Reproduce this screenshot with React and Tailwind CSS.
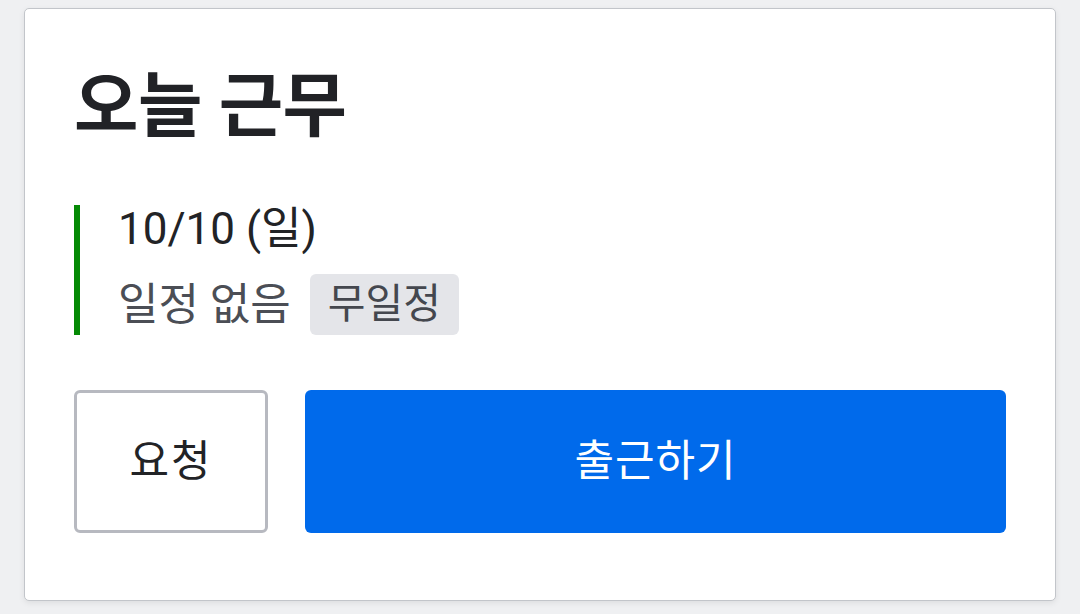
export default function App() {
  return (
    <div
      className="min-h-[614px] bg-[#eff0f2] pt-2 px-6"
      style={{ fontFamily: 'Roboto, "Noto Sans CJK KR", sans-serif' }}
    >
      <div className="h-[593px] bg-white border border-[#c2c5ca] rounded-[5px] shadow-[0_2px_6px_rgba(0,0,0,0.08)] px-[49px] pt-[58px]">
        {/* Title */}
        <h1 className="text-[70px] leading-[80px] font-semibold text-[#212226] tracking-[-0.5px]">오늘 근무</h1>

        {/* Today info */}
        <div className="mt-[58px] border-l-[6px] border-[#058a05] pl-[38px] h-[130px] flex flex-col justify-between">
          <div className="text-[44px] leading-[48px] text-[#222326]">10/10 (일)</div>
          <div className="flex items-center h-[61px]">
            <span className="text-[44px] text-[#4b4e55] leading-none">일정 없음</span>
            <span className="ml-[19px] h-[61px] px-[18px] flex items-center bg-[#e4e5e9] rounded-[6px] text-[41px] text-[#44474e] leading-none">
              무일정
            </span>
          </div>
        </div>

        {/* Actions */}
        <div className="mt-[55px] flex gap-[37px] h-[143px]">
          <button className="w-[194px] h-full border-[3px] border-[#b7b9c0] rounded-[6px] bg-white text-[43px] text-[#222326] tracking-[2px]">
            요청
          </button>
          <button className="flex-1 h-full bg-[#006aeb] rounded-[6px] text-[43px] text-white tracking-[1px]">
            출근하기
          </button>
        </div>
      </div>
    </div>
  );
}
